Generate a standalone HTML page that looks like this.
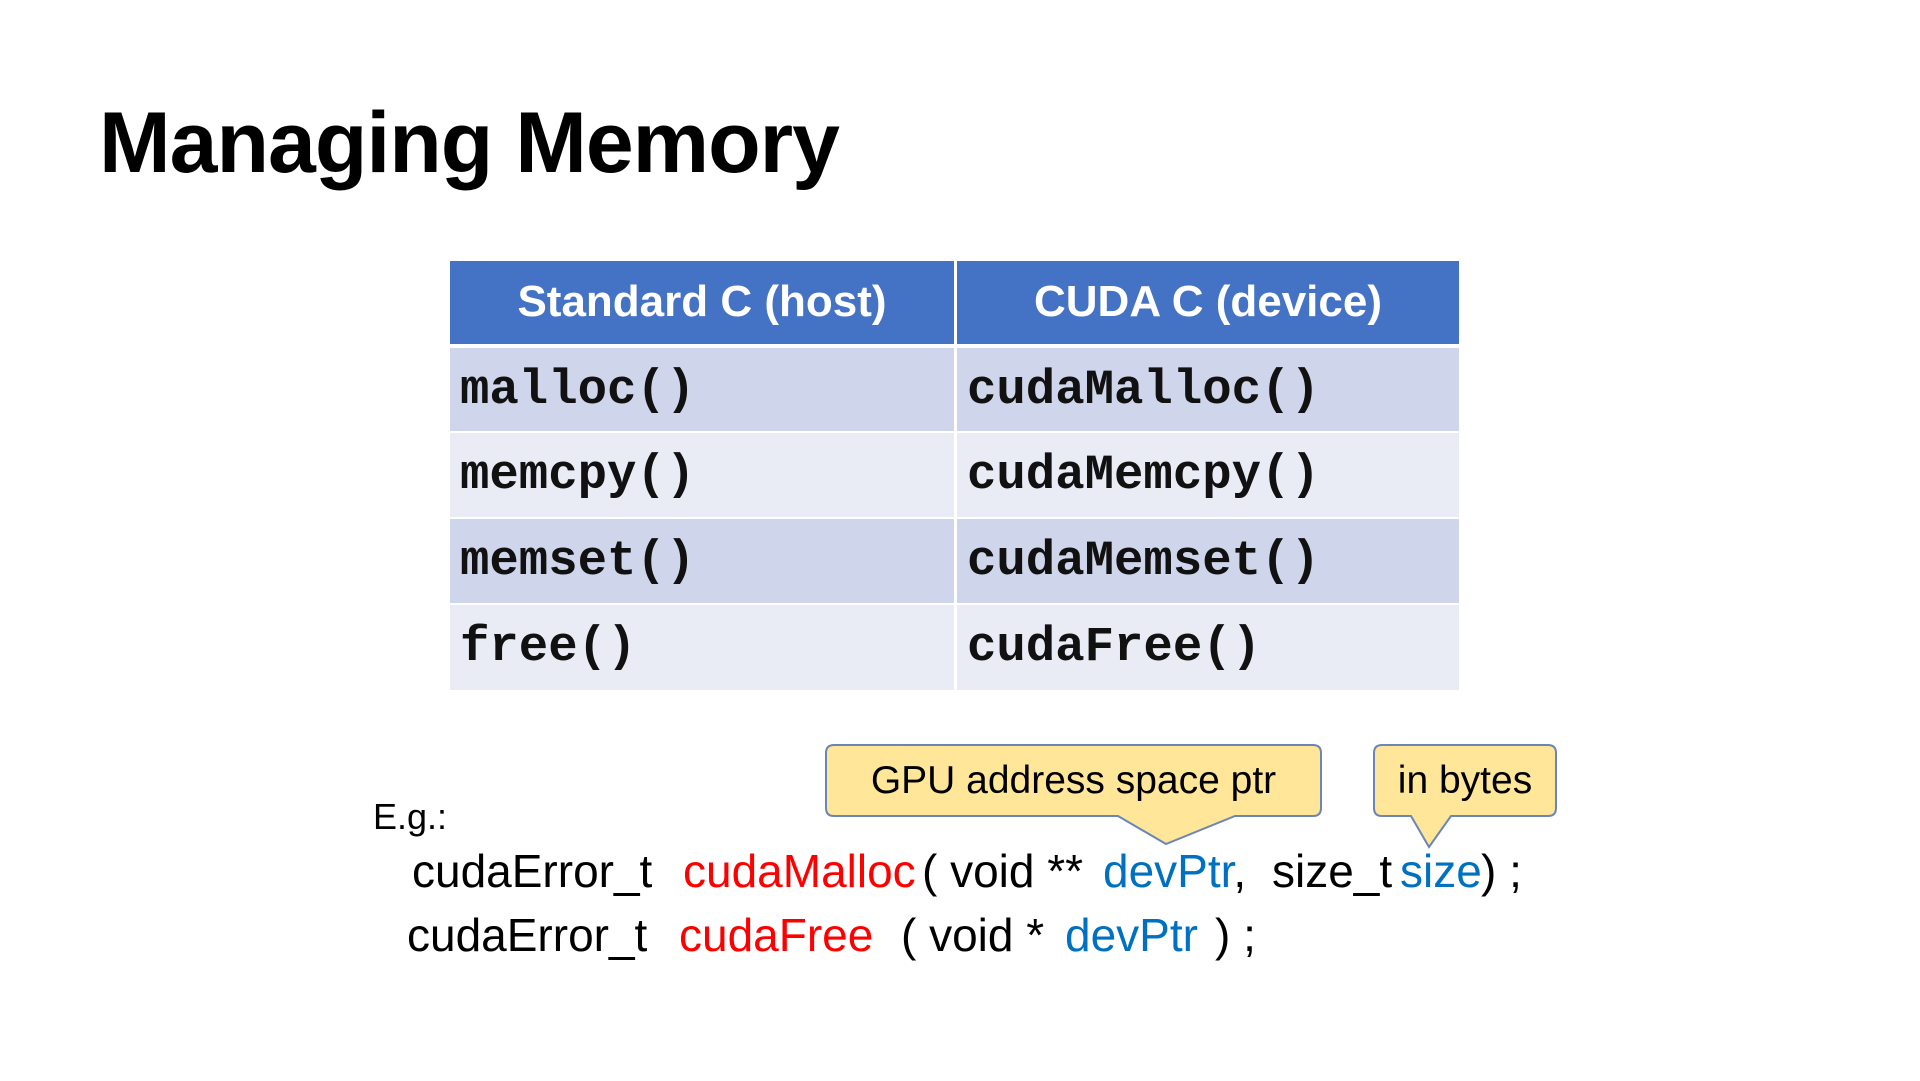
<!DOCTYPE html>
<html><head><meta charset="utf-8"><style>
body{margin:0;width:1920px;height:1081px;background:#fff;position:relative;overflow:hidden;font-family:"Liberation Sans",sans-serif}
.a{position:absolute;white-space:nowrap}
h1{position:absolute;left:99px;top:94px;margin:0;font-size:86px;font-weight:bold;letter-spacing:-1px}
.cell{position:absolute;box-sizing:border-box;font-family:"Liberation Mono",monospace;font-weight:bold;font-size:49px;padding-left:10px;line-height:84px;color:#111}
.hd{position:absolute;background:#4472C4;color:#fff;font-weight:bold;font-size:44px;text-align:center;line-height:82px}
.c{font-size:46px;position:absolute;white-space:nowrap;color:#000}
.r{color:#FF0000}.b{color:#0070C0}
</style></head><body>
<h1>Managing Memory</h1>
<div class="hd" style="left:450px;top:261px;width:504px;height:83px">Standard C (host)</div>
<div class="hd" style="left:957px;top:261px;width:502px;height:83px">CUDA C (device)</div>
<div class="cell" style="left:450px;top:348px;width:504px;height:83px;background:#CFD5EA">malloc()</div>
<div class="cell" style="left:957px;top:348px;width:502px;height:83px;background:#CFD5EA">cudaMalloc()</div>
<div class="cell" style="left:450px;top:433px;width:504px;height:84px;background:#E9EBF5">memcpy()</div>
<div class="cell" style="left:957px;top:433px;width:502px;height:84px;background:#E9EBF5">cudaMemcpy()</div>
<div class="cell" style="left:450px;top:519px;width:504px;height:84px;background:#CFD5EA">memset()</div>
<div class="cell" style="left:957px;top:519px;width:502px;height:84px;background:#CFD5EA">cudaMemset()</div>
<div class="cell" style="left:450px;top:605px;width:504px;height:85px;background:#E9EBF5">free()</div>
<div class="cell" style="left:957px;top:605px;width:502px;height:85px;background:#E9EBF5">cudaFree()</div>
<svg class="a" style="left:0;top:0" width="1920" height="1081">
<path d="M834,745 H1313 Q1321,745 1321,753 V808 Q1321,816 1313,816 H1235 L1166,844 L1118,816 H834 Q826,816 826,808 V753 Q826,745 834,745 Z" fill="#FFE699" stroke="#6A86B8" stroke-width="2"/>
<path d="M1382,745 H1548 Q1556,745 1556,753 V808 Q1556,816 1548,816 H1451 L1429,847 L1411,816 H1382 Q1374,816 1374,808 V753 Q1374,745 1382,745 Z" fill="#FFE699" stroke="#6A86B8" stroke-width="2"/>
</svg>
<div class="a" style="left:826px;top:759px;width:495px;text-align:center;font-size:39px">GPU address space ptr</div>
<div class="a" style="left:1374px;top:759px;width:182px;text-align:center;font-size:39px">in bytes</div>
<div class="c" style="left:373px;top:796px;font-size:36px">E.g.:</div>
<div class="c" style="left:412px;top:844px">cudaError_t</div>
<div class="c r" style="left:683px;top:844px">cudaMalloc</div>
<div class="c" style="left:922px;top:844px">( void **</div>
<div class="c b" style="left:1103px;top:844px">devPtr<span style="color:#000">,</span></div>
<div class="c" style="left:1272px;top:844px">size_t</div>
<div class="c b" style="left:1400px;top:844px">size</div>
<div class="c" style="left:1481px;top:844px">) ;</div>
<div class="c" style="left:407px;top:908px">cudaError_t</div>
<div class="c r" style="left:679px;top:908px">cudaFree</div>
<div class="c" style="left:901px;top:908px">( void *</div>
<div class="c b" style="left:1065px;top:908px">devPtr</div>
<div class="c" style="left:1215px;top:908px">) ;</div>
</body></html>
